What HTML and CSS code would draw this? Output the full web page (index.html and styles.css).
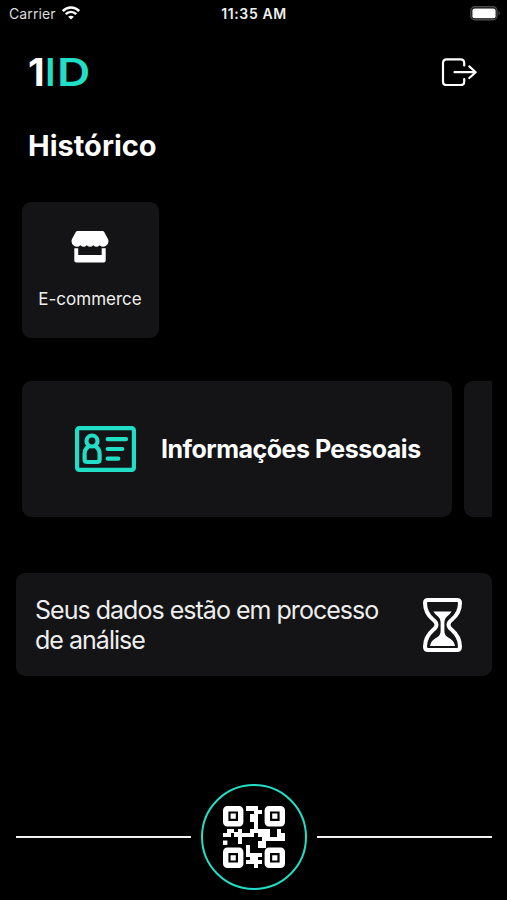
FILE: index.html
```html
<!DOCTYPE html>
<html lang="pt-BR">
<head>
    <meta charset="UTF-8">
    <meta name="viewport" content="width=device-width, initial-scale=1.0">
    <title>1ID</title>
    <link rel="stylesheet" href="styles.css">
</head>
<body>

<!-- Status bar -->
<div class="status-bar">
    <div class="carrier">
        <span>Carrier</span>
        <svg width="18" height="14" viewBox="0 0 18 14" fill="none" stroke="#fff" stroke-width="2.5">
            <path d="M0.8 5 C5.5 0.3 12.5 0.3 17.2 5"/>
            <path d="M3.7 8.2 C6.8 5.2 11.2 5.2 14.3 8.2"/>
            <path d="M9 13.6 L6.1 10.7 Q9 8.6 11.9 10.7 Z" fill="#fff" stroke="none"/>
        </svg>
    </div>
    <span class="clock">11:35 AM</span>
    <svg class="battery" width="31" height="15" viewBox="0 0 31 15">
        <rect x="0.8" y="0.8" width="26.2" height="13" rx="4" fill="none" stroke="#4a4a4c" stroke-width="1.4"/>
        <rect x="2.4" y="2.4" width="23.2" height="9.8" rx="2" fill="#fff"/>
        <path d="M28.6 4.8 Q31 7.3 28.6 9.8 Z" fill="#4a4a4c"/>
    </svg>
</div>

<header class="header">
    <div class="logo"><span class="one">1</span><span class="i">I</span><span class="d">D</span></div>
    <svg class="logout" width="37" height="29" viewBox="0 0 37 29" fill="none" stroke="#fff" stroke-width="2.2" stroke-linecap="round" stroke-linejoin="round">
        <path d="M23.2 7.5 V5 Q23.2 1.4 19.6 1.4 H5.6 Q2 1.4 2 5 V23.4 Q2 27 5.6 27 H19.6 Q23.2 27 23.2 23.4 V21"/>
        <path d="M13.5 14.2 H34.5 M28.3 8.4 L34.7 14.2 L28.3 20"/>
    </svg>
</header>

<h1>Histórico</h1>

<div class="card shop">
    <svg width="38" height="32" viewBox="0 0 38 32" fill="#fff">
        <path d="M6.5 0 H31.5 Q32.6 0 33.2 1 L37 8 Q38.6 12.5 34.8 15 Q31.5 17 28.6 14.2 Q25.5 17.2 22.3 14.2 Q19 17.2 15.8 14.2 Q12.6 17.2 9.5 14.2 Q6.5 17 3.2 15 Q-0.6 12.5 1 8 L4.8 1 Q5.4 0 6.5 0 Z"/>
        <path d="M3.3 17.3 H7.2 V24 H30.7 V17.3 H34.7 V29.4 Q34.7 31.5 32.6 31.5 H5.4 Q3.3 31.5 3.3 29.4 Z"/>
    </svg>
    <span>E-commerce</span>
</div>

<!-- Horizontal list -->
<div class="card-list">
    <div class="card info">
        <svg width="61" height="46" viewBox="0 0 61 46" fill="none" stroke="#20dfc6" stroke-width="4.2" stroke-linecap="round" stroke-linejoin="round">
            <rect x="2.1" y="2.1" width="56.8" height="41.8" rx="2.2"/>
            <circle cx="17" cy="15" r="5.5"/>
            <path d="M13.3 20.8 Q9.6 23 9.6 28 V33.5 Q9.6 36 12.2 36 H22 Q24.6 36 24.6 33.5 V28 Q24.6 23 20.9 20.8"/>
            <path d="M32.7 13.2 H51 M32.7 23 H47.3 M32.7 32.7 H43.3"/>
        </svg>
        <span>Informações Pessoais</span>
    </div>
    <div class="card next"></div>
</div>

<div class="card notice">
    <p>Seus dados estão em processo<br>de análise</p>
    <svg width="39" height="54" viewBox="0 0 39 54">
        <path d="M5 2 H34 Q37 2 37 5 Q37 15 29 21.5 Q22 26.8 29 32 Q37 39 37 48.5 Q37 52 34 52 H5 Q2 52 2 48.5 Q2 39 10 32 Q17 26.8 10 21.5 Q2 15 2 5 Q2 2 5 2 Z" fill="none" stroke="#fff" stroke-width="4"/>
        <path d="M10.4 13.6 H28.6 Q27 16.6 23.5 19 Q21.4 21 21.4 24 V33 Q21.4 37 24.5 39 Q31.5 42.5 32 48 H7 Q7.5 42.5 14.5 39 Q17.6 37 17.6 33 V24 Q17.6 21 15.5 19 Q12 16.6 10.4 13.6 Z" fill="#fff"/>
    </svg>
</div>

<!-- QR code button -->
<footer class="footer">
    <div class="line"></div>
    <div class="qr-button">
        <svg width="62" height="62" viewBox="0 0 62 62">
            <g fill="none" stroke="#fff" stroke-width="5.4">
                <rect x="2.7" y="2.7" width="15" height="15" rx="1.6"/>
                <rect x="44.3" y="2.7" width="15" height="15" rx="1.6"/>
                <rect x="2.7" y="44.3" width="15" height="15" rx="1.6"/>
                <rect x="44.3" y="44.3" width="15" height="15" rx="1.6"/>
            </g>
            <g fill="#fff">
                <path d="M7.6 7.6 h5.2 v5.2 h-5.2 Z M49.2 7.6 h5.2 v5.2 h-5.2 Z M7.6 49.2 h5.2 v5.2 h-5.2 Z M49.2 49.2 h5.2 v5.2 h-5.2 Z"/>
                <path d="M23 0 H35 V4 H39 V8 H35 V16 H27 V8 H31 V5 H23 Z"/>
                <path d="M31 15 H35 V23 H47 V31 H54 V23 H58 V27 H62 V35 H43 V38 H43 V42 H35 V35 H39 V31 H35 V27 H31 V31 H19 V38 H15 V31 H11 V27 H8 V31 H0 V27 H4 V23 H11 V26 H15 V23 H19 V27 H27 V23 H31 Z"/>
                <path d="M0 34.5 h4.4 v4.4 h-4.4 Z"/>
                <path d="M23 39 H27 V47 H39 V51 H35 V54 H39 V58 H35 V62 H31 V58 H23 V54 H27 V51 H23 Z"/>
            </g>
        </svg>
    </div>
    <div class="line"></div>
</footer>

</body>
</html>
```
FILE: styles.css
```css
* {
    box-sizing: border-box;
}
body {
    margin: 0;
    height: 900px;
    background-color: #000;
    color: #fff;
    font-family: Inter, "Liberation Sans", sans-serif;
    overflow: hidden;
}
svg {
    display: block;
    flex-shrink: 0;
}
.status-bar {
    display: grid;
    grid-template-columns: 1fr auto 1fr;
    align-items: center;
    height: 28px;
    padding: 0 6px 0 9px;
    font-size: 14px;
}
.carrier {
    display: flex;
    align-items: center;
    gap: 6px;
    margin-top: -1px;
    letter-spacing: 0.1px;
    color: #ddd;
}
.carrier svg {
    margin-top: -1px;
}
.clock {
    font-weight: 600;
    font-size: 14px;
    letter-spacing: 0.6px;
    margin-top: -1px;
    margin-right: 2px;
    color: #eee;
}
.battery {
    justify-self: end;
    margin-top: -1px;
}
.header {
    display: flex;
    justify-content: space-between;
    align-items: center;
    height: 88px;
    padding: 0 29px 0 28px;
}
.logo {
    display: flex;
    font-size: 38.5px;
    line-height: 40px;
    font-weight: 600;
    color: #20dfc6;
}
.logo .one {
    width: 17px;
    font-weight: 700;
    color: #fff;
}
.logo .i {
    width: 12px;
}
.logo .d {
    transform: scaleX(1.2);
    transform-origin: left;
}
h1 {
    margin: 13px 0 0 28px;
    font-size: 29px;
    line-height: 34px;
    font-weight: 700;
}
.card {
    background-color: #141416;
    border-radius: 9px;
}
.shop {
    display: flex;
    flex-direction: column;
    align-items: center;
    width: 137px;
    height: 136px;
    margin: 39px 0 0 22px;
    padding: 29px 1px 0 0;
    font-size: 17px;
    line-height: 20px;
    color: #eee;
}
.shop span {
    margin-top: 26px;
}
.card-list {
    display: flex;
    gap: 12px;
    margin: 43px 15px 0 22px;
    overflow: hidden;
}
.info {
    display: flex;
    align-items: center;
    flex: 0 0 430px;
    height: 136px;
    padding-left: 53px;
    font-size: 25px;
    font-weight: 700;
    letter-spacing: -0.5px;
    white-space: nowrap;
}
.info span {
    margin-left: 25px;
}
.next {
    flex: 0 0 430px;
}
.notice {
    display: flex;
    justify-content: space-between;
    align-items: center;
    height: 103px;
    margin: 56px 15px 0 16px;
    padding: 0 30px 0 19px;
    font-size: 25px;
    line-height: 30px;
    letter-spacing: -0.98px;
    color: #eee;
}
.notice p {
    margin: 1px 0 0;
    white-space: nowrap;
}
.footer {
    display: flex;
    align-items: center;
    gap: 10px;
    margin: 108px 15px 0 16px;
}
.line {
    flex: 1;
    height: 2px;
    background-color: #f2f2f2;
}
.qr-button {
    display: flex;
    justify-content: center;
    align-items: center;
    width: 106px;
    height: 106px;
    border: 2px solid #20dfc6;
    border-radius: 50%;
}
```
